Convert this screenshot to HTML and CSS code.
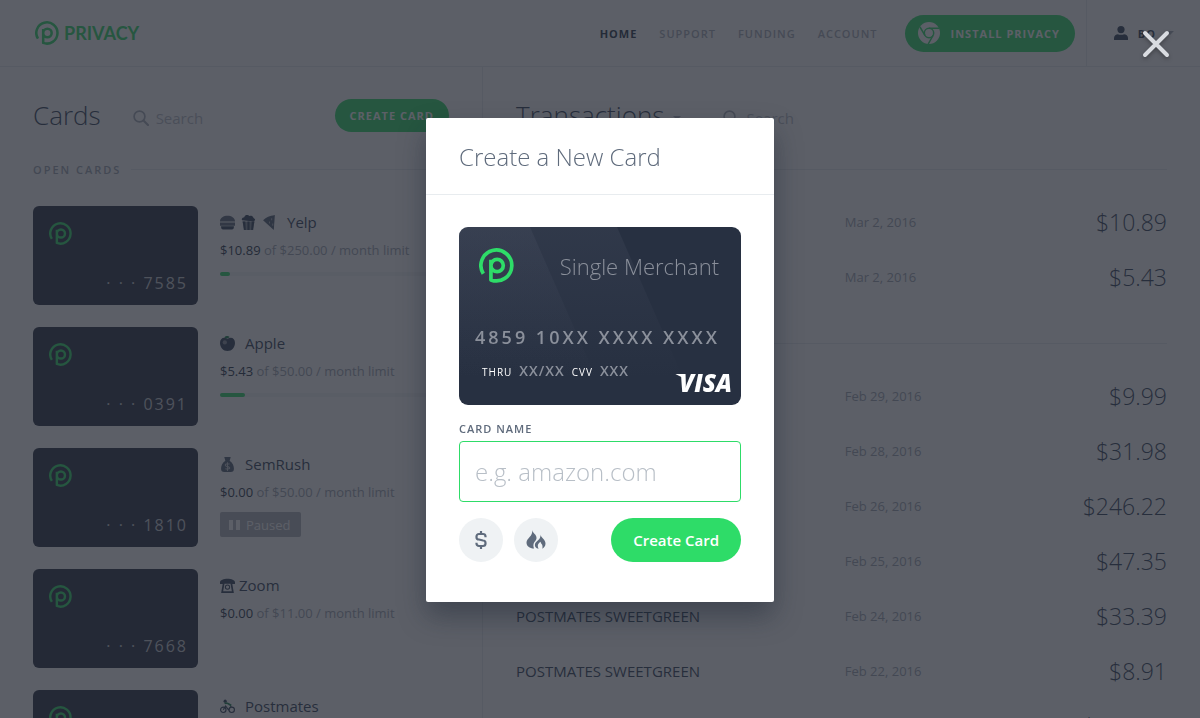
FILE: index.html
```html
<!DOCTYPE html>
<html lang="en">
<head>
<meta charset="utf-8">
<meta name="viewport" content="width=device-width, initial-scale=1">
<title>Privacy</title>
<link rel="stylesheet" href="styles.css">
</head>
<body>
<svg class="defs" aria-hidden="true">
  <symbol id="logo" viewBox="0 0 34 34"><path d="M4.2 25A15 15 0 1 1 11.6 31V11.5M11.6 17a6 6 0 1 1 6 6 6 6 0 0 1-6-6" fill="none" stroke="currentColor" stroke-width="3.6" stroke-linejoin="round"/></symbol>
  <symbol id="search" viewBox="0 0 16 16"><circle cx="6.5" cy="6.5" r="5.4" fill="none" stroke="currentColor" stroke-width="1.7"/><path d="M10.5 10.5 15 15" stroke="currentColor" stroke-width="2.2" stroke-linecap="round"/></symbol>
</svg>
<div class="page">
  <header class="topbar">
    <a class="brand" href="#"><svg><use href="#logo"/></svg>PRIVACY</a>
    <nav class="nav">
      <a class="active" href="#">HOME</a>
      <a href="#">SUPPORT</a>
      <a href="#">FUNDING</a>
      <a href="#">ACCOUNT</a>
    </nav>
    <button class="pill install" type="button">
      <svg viewBox="0 0 22 22"><circle cx="11" cy="11" r="11" fill="#fff"/><g fill="none" stroke="#2edc68" stroke-width="1.5"><circle cx="11" cy="11" r="4.7"/><path d="M11 6.3H21M6.9 13.3 2 5M15.1 13.3 10.2 22"/></g></svg>
      INSTALL PRIVACY
    </button>
    <button class="user" type="button">
      <svg viewBox="0 0 14 14"><circle cx="7" cy="3.6" r="3.6"/><path d="M0 14v-2c0-2.500 2-3.800 4-3.800 1 .8 5 .8 6 0 2 0 4 1.300 4 3.800v2z"/></svg>
      BO
      <span class="caret"></span>
    </button>
  </header>
  <main class="columns">
    <section class="cards">
      <div class="heading">
        <h1>Cards</h1>
        <label class="search"><svg><use href="#search"/></svg><input type="search" placeholder="Search" aria-label="Search cards"></label>
        <button class="pill create" type="button">CREATE CARD</button>
      </div>
      <h2 class="rule">OPEN CARDS</h2>
      <ul class="list">
        <li>
          <div class="mini"><svg><use href="#logo"/></svg><span>· · · 7585</span></div>
          <div class="info">
            <h3>
              <svg viewBox="0 0 14 14"><path d="M0 6c0-7 14-7 14 0zM0 7h14v3H0z" opacity=".8"/><path d="M1 10.500h12c0 3-1 3-3 3H4c-2 0-3 0-3-3z"/></svg>
              <svg viewBox="0 0 14 14"><path d="M1 5c-1-2 1-3 2-3 1-3 4-2 5-1 3-1 3 1 4 2 2 1 1 2 0 3z"/><path d="M1.500 6h11l-1 8h-9z" opacity=".6"/><path d="m1.500 6 1.500 8h1.500L4 6zM6 6v8h2V6zM10 6l-.5 8H11l1.500-8z"/></svg>
              <svg viewBox="0 0 14 14"><path d="M12 0c-5 1-8 2-11 5l10 9z" opacity=".85"/><path d="M9 3v2M7 6v2M10 8v2" stroke="#aab0b8"/></svg>
              <span>Yelp</span></h3>
            <p><b>$10.89</b> of $250.00 / month limit</p>
            <div class="bar"><i style="width:4.4%"></i></div>
          </div>
        </li>
        <li>
          <div class="mini"><svg><use href="#logo"/></svg><span>· · · 0391</span></div>
          <div class="info">
            <h3>
              <svg viewBox="0 0 14 14"><path d="M7 2.500c4-2 7 0 7 4s-3 7.500-7 7.500-7-3.500-7-7.500 3-6 7-4z"/><path d="M4 1.500c1-2 4-2 5-.5-1 1-3 2-5 .5z" fill="#1e8050"/><circle cx="4.500" cy="6" r="2" fill="#8a92a0"/></svg>
              <span>Apple</span></h3>
            <p><b>$5.43</b> of $50.00 / month limit</p>
            <div class="bar"><i style="width:11%"></i></div>
          </div>
        </li>
        <li>
          <div class="mini"><svg><use href="#logo"/></svg><span>· · · 1810</span></div>
          <div class="info">
            <h3>
              <svg viewBox="0 0 14 14"><path d="M4 0h6L9 3.500c3 2 4 5 4 7.500 0 2-1 3-3 3H4c-2 0-3-1-3-3 0-2.500 1-5.500 4-7.500z" opacity=".85"/><path d="M9 6.500c-5-1-5 2-2 2.500s3 3-2 2M7 5v8" fill="none" stroke="#c4c8ce"/></svg>
              <span>SemRush</span></h3>
            <p><b>$0.00</b> of $50.00 / month limit</p>
            <div class="paused"><svg viewBox="0 0 11 10"><path d="M0 0h4v10H0zM7 0h4v10H7z"/></svg>Paused</div>
          </div>
        </li>
        <li>
          <div class="mini"><svg><use href="#logo"/></svg><span>· · · 7668</span></div>
          <div class="info">
            <h3 class="tight">
              <svg viewBox="0 0 14 14"><path d="M0 5.500V4c0-4.500 14-4.500 14 0v1.500h-3.500V3.800h-7v1.700z"/><path d="M3.500 4.500h7l1.500 8.700H2z" fill="none" stroke="#34445a" stroke-width="1.600"/><circle cx="7" cy="8.500" r="2" fill="none" stroke="#34445a"/></svg>
              <span>Zoom</span></h3>
            <p><b>$0.00</b> of $11.00 / month limit</p>
          </div>
        </li>
        <li>
          <div class="mini"><svg><use href="#logo"/></svg></div>
          <div class="info">
            <h3>
              <svg viewBox="0 0 16 15"><g fill="none" stroke="#34445a" stroke-width="1.200"><circle cx="3.500" cy="11" r="2.900"/><circle cx="12.500" cy="11" r="2.900"/><path d="M3.500 11 6 7l3 4 3-4"/></g><circle cx="5.500" cy="1.800" r="1.700"/><path d="M5 4.500c2-2 4 0 7 2" fill="none" stroke="#1e8050" stroke-width="2"/></svg>
              <span>Postmates</span></h3>
          </div>
        </li>
      </ul>
    </section>
    <section class="transactions">
      <div class="heading">
        <h1>Transactions</h1><span class="caret"></span>
        <label class="search"><svg><use href="#search"/></svg><input type="search" placeholder="Search" aria-label="Search transactions"></label>
      </div>
      <hr>
      <table>
        <tr><td></td><td>Mar 2, 2016</td><td>$10.89</td></tr>
        <tr><td></td><td>Mar 2, 2016</td><td>$5.43</td></tr>
      </table>
      <hr>
      <table>
        <tr><td></td><td>Feb 29, 2016</td><td>$9.99</td></tr>
        <tr><td></td><td>Feb 28, 2016</td><td>$31.98</td></tr>
        <tr><td></td><td>Feb 26, 2016</td><td>$246.22</td></tr>
        <tr><td></td><td>Feb 25, 2016</td><td>$47.35</td></tr>
        <tr><td>POSTMATES SWEETGREEN</td><td>Feb 24, 2016</td><td>$33.39</td></tr>
        <tr><td>POSTMATES SWEETGREEN</td><td>Feb 22, 2016</td><td>$8.91</td></tr>
        <tr><td></td><td></td><td>$100.00</td></tr>
      </table>
    </section>
  </main>
</div>
<div class="overlay">
  <button class="close" type="button" aria-label="Close"><svg viewBox="0 0 28 28"><path d="M3 3 25 25M25 3 3 25" stroke="#d9dce1" stroke-width="4" stroke-linecap="round"/></svg></button>
  <form class="modal" role="dialog" aria-labelledby="title">
    <h2 id="title">Create a New Card</h2>
    <div class="body">
      <div class="card">
        <svg class="shine" viewBox="0 0 282 178" preserveAspectRatio="none">
          <defs>
            <linearGradient id="fade" x1="0" y1="0" x2="0" y2="1"><stop offset="0" stop-color="#5a6072" stop-opacity=".18"/><stop offset=".85" stop-color="#5a6072" stop-opacity="0"/></linearGradient>
          </defs>
          <path d="M0 0h71l78 178H0z" fill="url(#fade)"/><path d="M0 0h158l78 178H0z" fill="url(#fade)"/>
        </svg>
        <div class="card-top"><svg><use href="#logo"/></svg><span>Single Merchant</span></div>
        <div class="number">4859 10XX XXXX XXXX</div>
        <div class="card-foot">
          <div class="details"><small>THRU</small><b>XX/XX</b><small>CVV</small><b>XXX</b></div>
          <span class="visa">VISA</span>
        </div>
      </div>
      <label for="name">CARD NAME</label>
      <input id="name" class="name" type="text" placeholder="e.g. amazon.com">
      <div class="actions">
        <button class="round" type="button" aria-label="Spending limit"><svg viewBox="0 0 20 20"><path d="M14.500 7.300V6.500c0-1.600-1-2.500-2.500-2.500H8C6.500 4 5.500 5 5.500 6.500v.7c0 1.500 1 2.300 2.500 2.300l4 1c1.500 0 2.500 1 2.500 2.400v.6c0 1.500-1 2.500-2.500 2.500H8c-1.500 0-2.500-1-2.500-2.500v-.8M10 1v3M10 16v3" fill="none" stroke="#5f6b7c" stroke-width="2.200"/></svg></button>
        <button class="round" type="button" aria-label="Burner card"><svg viewBox="0 0 20 20"><path d="M6 0c.5 3 5 4.500 4.500 8.500-.2 1.800-2 3-2.700 4.800-.6 1.600-.5 3.500.3 5.200C3.500 18.500.5 16 .5 12.500.500 8 7.500 6 6 0zM14.500 4.500c0 2.500 5 5 5 9 0 2.500-1.200 4-3.200 5.200.5-2 .2-3.700-.7-4.700-.6-.7-1-1.300-1-2.200-1.500 1-2.700 2.200-2.800 4 0 1 .2 2 .8 2.900-2.700-.5-4-2-3.700-4.200.4-3.500 6.200-4.500 5.600-10z" fill="#5f6b7c"/></svg></button>
        <button class="submit" type="submit">Create Card</button>
      </div>
    </div>
  </form>
</div>
</body>
</html>
```
FILE: styles.css
```css
* { box-sizing: border-box; }
body, h1, h2, h3, p, ul { margin: 0; padding: 0; }
body {
  height: 100vh;
  overflow: hidden;
  background: #fff;
  color: #34445a;
  font-family: "Open Sans", "Noto Sans", sans-serif;
  font-size: 13px;
}
button, input { font: inherit; color: inherit; border: 0; background: none; padding: 0; }
a { color: inherit; text-decoration: none; }
svg { display: block; flex: none; fill: #34445a; }
.defs { position: absolute; width: 0; height: 0; }
.page { height: 100vh; overflow: hidden; }

.topbar {
  display: flex;
  align-items: center;
  height: 67px;
  padding-left: 35px;
  border-bottom: 1px solid #e8ebee;
}
.brand {
  display: flex;
  align-items: center;
  gap: 5px;
  margin-right: auto;
  color: #2edc68;
  font: 700 18px/24px Lato, sans-serif;
}
.brand svg { width: 24px; height: 24px; }
.nav {
  display: flex;
  gap: 22px;
  margin-right: 27px;
  color: #a8aeb9;
  font-size: 11px;
  font-weight: 600;
  letter-spacing: 1px;
}
.nav .active { color: #28364a; font-weight: 700; }
.pill {
  border-radius: 20px;
  background: #2edc68;
  color: #fff;
  font-size: 11px;
  font-weight: 700;
  letter-spacing: 1px;
}
.install { display: flex; align-items: center; gap: 11px; height: 37px; padding: 0 15px 0 13px; }
.install svg { width: 22px; height: 22px; }
.user {
  display: flex;
  align-items: center;
  gap: 10px;
  height: 100%;
  margin-left: 11px;
  padding: 0 26px 0 27px;
  border-left: 1px solid #e8ebee;
  font-size: 11px;
  font-weight: 700;
  letter-spacing: 1px;
}
.user svg { width: 14px; height: 14px; }
.caret { border: 4px solid transparent; border-top-color: #a8aeb9; border-bottom: 0; }

.columns { display: grid; grid-template-columns: minmax(0, 483fr) minmax(0, 717fr); }
.cards { padding: 32px 33px 0; border-right: 1px solid #e8ebee; }
.transactions { padding: 32px 33px 0; }
.heading { display: flex; align-items: center; height: 33px; }
.heading h1 { font-size: 26px; font-weight: 300; line-height: 33px; }
.search { display: flex; align-items: center; gap: 7px; margin: 5px 0 0 32px; color: #a8aeb9; }
.search svg { width: 16px; height: 16px; }
.search input { width: 100px; font-size: 15px; line-height: 22px; }
.search input::placeholder { color: #b8bdc7; opacity: 1; }
.create { height: 33px; margin-left: auto; padding: 0 15px; }
.transactions .caret { margin: 4px 0 0 9px; }
.transactions .search { margin-left: 42px; }

.rule {
  display: flex;
  align-items: center;
  gap: 10px;
  height: 16px;
  margin: 29px 0;
  color: #a0a7b3;
  font-size: 11px;
  font-weight: 600;
  letter-spacing: 2px;
}
.rule::after { content: ""; flex: 1; border-top: 1px solid #e8ebee; }
.list { list-style: none; display: grid; gap: 22px; }
.list li { display: flex; gap: 22px; }
.mini {
  display: flex;
  flex: none;
  flex-direction: column;
  justify-content: space-between;
  width: 165px;
  height: 99px;
  padding: 16px 10px 10px 16px;
  border-radius: 6px;
  background: #283042;
}
.mini svg { width: 23px; height: 23px; color: #2edc68; }
.mini span { align-self: flex-end; color: #c8ccd2; font-size: 16px; line-height: 24px; letter-spacing: 2px; }
.info { flex: 1; padding-top: 5px; }
.info h3 { display: flex; align-items: center; gap: 6px; font-size: 15px; font-weight: 400; line-height: 22px; }
.info h3 svg { width: 15px; height: 15px; }
.info h3 span { margin-left: 4px; }
.info .tight span { margin-left: -2px; }
.info p { margin-top: 7px; color: #a0a7b3; line-height: 20px; }
.info b { color: #28364a; font-weight: 400; }
.bar { height: 4px; margin-top: 12px; border-radius: 2px; background: #f4f5f7; }
.bar i { display: block; height: 4px; border-radius: 2px; background: #2edc68; }
.paused {
  display: inline-flex;
  align-items: center;
  gap: 6px;
  height: 25px;
  margin-top: 10px;
  padding: 0 11px 0 9px;
  border-radius: 2px;
  background: #b0b4bc;
  color: #fff;
  font-size: 13px;
}
.paused svg { width: 11px; height: 10px; fill: #fff; }

hr { height: 1px; margin: 37px 0 24px; border: 0; background: #e8ebee; }
table + hr { margin: 39px 0 24px; }
table { width: 100%; table-layout: fixed; border-collapse: collapse; }
td { height: 55px; padding: 0; white-space: nowrap; }
td:first-child { width: 50.5%; font-size: 15px; }
td:nth-child(2) { color: #a0a7b3; }
td:last-child { font-size: 23px; font-weight: 300; text-align: right; }

.overlay {
  position: fixed;
  inset: 0;
  display: flex;
  align-items: center;
  justify-content: center;
  padding-top: 2px;
  background: rgba(35, 39, 50, .74);
}
.close { position: absolute; top: 30px; right: 30px; filter: drop-shadow(0 2px 2px rgba(0, 0, 0, .3)); }
.close svg { width: 28px; height: 28px; }
.modal {
  width: 348px;
  border-radius: 2px;
  background: #fff;
  color: #5f6b7c;
  box-shadow: 0 14px 28px rgba(20, 30, 45, .4);
}
.modal h2 { padding: 22px 33px 21px; border-bottom: 1px solid #e8ecef; font-size: 24px; font-weight: 300; line-height: 33px; }
.body { padding: 32px 33px 40px; }
.card {
  position: relative;
  display: flex;
  flex-direction: column;
  height: 178px;
  padding: 21px 9px 8px 16px;
  overflow: hidden;
  border-radius: 9px;
  background: #273041;
}
.shine { position: absolute; inset: 0; width: 100%; height: 100%; }
.card-top, .number, .card-foot { position: relative; color: #8b909b; }
.card-top { display: flex; align-items: center; justify-content: space-between; padding: 0 13px 0 4px; font-size: 22px; font-weight: 300; line-height: 34px; }
.card-top svg { width: 35px; height: 35px; color: #2edc68; }
.number { margin-top: 42px; font-size: 18px; font-weight: 600; line-height: 24px; letter-spacing: 3px; white-space: nowrap; }
.card-foot { display: flex; align-items: flex-start; justify-content: space-between; height: 36px; margin-top: auto; padding-left: 7px; }
.details { display: flex; align-items: baseline; gap: 7px; line-height: 20px; }
.details small { color: #fff; font-size: 10px; letter-spacing: 1px; }
.details b { font-size: 14px; font-weight: 600; letter-spacing: 1px; }
.visa { position: relative; align-self: flex-end; color: #fff; font-size: 24px; font-style: italic; font-weight: 800; line-height: 28px; }
.visa::before { content: ""; position: absolute; top: 5px; left: -4px; width: 10px; height: 5px; background: #fff; clip-path: polygon(0 0, 100% 0, 100% 100%); }
.body label { display: block; margin: 16px 0 4px; font-size: 11px; font-weight: 600; line-height: 16px; letter-spacing: 1px; }
.name { display: block; width: 100%; height: 61px; padding: 0 15px; border: 1px solid #2edc68; border-radius: 4px; font-size: 24px; font-weight: 300; }
.name::placeholder { color: #b8bfc7; opacity: 1; }
.actions { display: flex; gap: 11px; margin-top: 16px; }
.round { display: grid; place-items: center; width: 44px; height: 44px; border-radius: 50%; background: #eff2f4; }
.round svg { width: 20px; height: 20px; }
.submit { height: 44px; margin-left: auto; padding: 0 22px; border-radius: 22px; background: #2edc68; color: #fff; font-size: 15px; font-weight: 600; }
```
